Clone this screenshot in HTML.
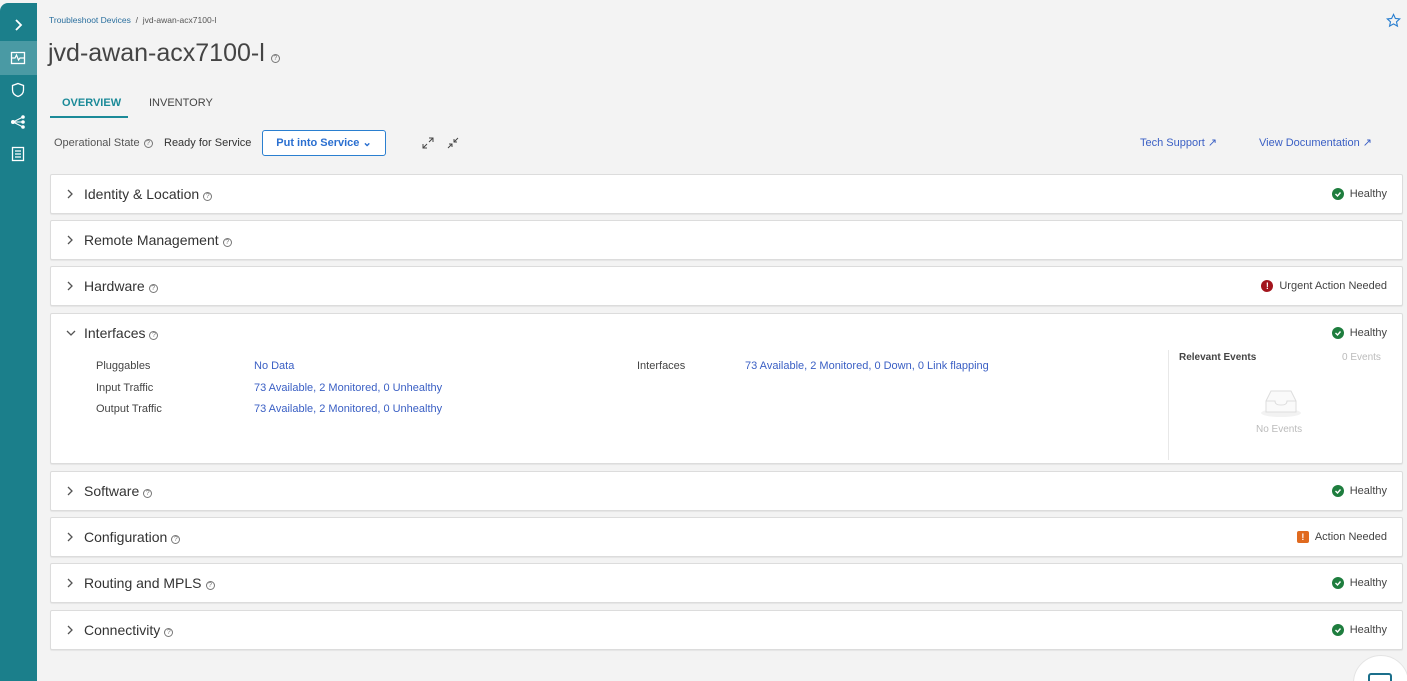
<!DOCTYPE html>
<html style="width:1407px;height:681px;overflow:hidden"><head><meta charset="utf-8"><style>
*{box-sizing:border-box;margin:0;padding:0}
body{width:1407px;height:681px;overflow:hidden;background:#f3f3f3;font-family:"Liberation Sans",sans-serif;color:#333;position:relative}
.sb{position:absolute;left:0;top:3px;width:37px;height:678px;background:#1b7f8b;border-radius:8px 0 0 0}
.sb .act{position:absolute;top:38px;left:0;width:37px;height:34px;background:#4a9aa4}
.sb svg{position:absolute;left:10px}
.a{position:absolute;white-space:nowrap}
.card{position:absolute;left:50px;width:1353px;background:#fff;border:1px solid #dcdcdc;border-radius:2px;box-shadow:0 1px 1px rgba(0,0,0,.06)}
.card .t{position:absolute;left:33px;top:11px;font-size:14px;color:#333}
.card .chev{position:absolute;left:14px;top:13px}
.q{display:inline-block;width:9px;height:9px;border:1px solid #777;border-radius:50%;font-size:7px;line-height:8px;text-align:center;color:#777;vertical-align:1px;margin-left:4px}
.st{position:absolute;right:15px;top:13px;font-size:11px;color:#444;display:flex;align-items:center;gap:6px}
.g{width:12px;height:12px;border-radius:50%;background:#1e7d3e;display:inline-flex;align-items:center;justify-content:center}
.lab{font-size:11px;color:#444}
.lnk{color:#3a5fc4}
</style></head><body>
<div class="sb">
<div class="act"></div>
<svg style="top:14px" width="16" height="16" viewBox="0 0 16 16"><path d="M6 3l5 5-5 5" stroke="#fff" stroke-width="1.8" fill="none"/></svg>
<svg style="top:47px" width="16" height="16" viewBox="0 0 16 16"><rect x="1.5" y="2.5" width="13" height="11" stroke="#fff" stroke-width="1.3" fill="none"/><path d="M2 8h3l1.5-3 2 5 1.5-2h4" stroke="#fff" stroke-width="1.2" fill="none"/></svg>
<svg style="top:79px" width="16" height="16" viewBox="0 0 16 16"><path d="M8 1.5l5.5 2v4.5c0 3.5-2.5 5.5-5.5 6.5-3-1-5.5-3-5.5-6.5V3.5z" stroke="#fff" stroke-width="1.3" fill="none"/></svg>
<svg style="top:111px" width="16" height="16" viewBox="0 0 16 16"><circle cx="3" cy="8" r="2" fill="#fff"/><circle cx="13" cy="3" r="1.8" fill="#fff"/><circle cx="13" cy="8" r="1.8" fill="#fff"/><circle cx="13" cy="13" r="1.8" fill="#fff"/><path d="M3 8L13 3M3 8h10M3 8l10 5" stroke="#fff" stroke-width="1"/></svg>
<svg style="top:143px" width="16" height="16" viewBox="0 0 16 16"><rect x="2.5" y="1.5" width="11" height="13" stroke="#fff" stroke-width="1.3" fill="none"/><path d="M5 5h6M5 8h6M5 11h6" stroke="#fff" stroke-width="1.2"/></svg>
</div>

<div class="a" style="left:49px;top:15px;font-size:8.5px;color:#555"><span style="color:#2a6f9e">Troubleshoot Devices</span> &nbsp;/&nbsp; jvd-awan-acx7100-l</div>
<svg class="a" style="left:1386px;top:13px" width="15" height="15" viewBox="0 0 16 16"><path d="M8 1.5l2 4.3 4.6.5-3.4 3.1 1 4.6L8 11.6 3.8 14l1-4.6L1.4 6.3l4.6-.5z" stroke="#2a7fd0" stroke-width="1.2" fill="none"/></svg>
<div class="a" style="left:48px;top:39px;font-size:25px;color:#444">jvd-awan-acx7100-l<span class="q" style="margin-left:6px">?</span></div>

<div class="a" style="left:62px;top:97px;font-size:11px;font-weight:bold;color:#1b8a98">OVERVIEW</div>
<div class="a" style="left:50px;top:116px;width:78px;height:2px;background:#1b8a98"></div>
<div class="a" style="left:149px;top:97px;font-size:11px;color:#444">INVENTORY</div>

<div class="a" style="left:54px;top:137px;font-size:11px;color:#555">Operational State<span class="q">?</span></div>
<div class="a" style="left:164px;top:137px;font-size:11px;color:#333">Ready for Service</div>
<div class="a" style="left:262px;top:130px;width:124px;height:26px;border:1px solid #2a7fd0;border-radius:3px;background:#fff;font-size:11px;font-weight:bold;color:#2a6fd0;text-align:center;line-height:24px">Put into Service &#8964;</div>
<svg class="a" style="left:422px;top:137px" width="12" height="12" viewBox="0 0 12 12"><path d="M1 11l4-4M7 5l4-4M1 7v4h4M7 1h4v4" stroke="#444" stroke-width="1" fill="none"/></svg>
<svg class="a" style="left:447px;top:137px" width="12" height="12" viewBox="0 0 12 12"><path d="M1 11l4-4M7 5l4-4M2 7h3v3M7 2v3h3" stroke="#444" stroke-width="1" fill="none"/></svg>
<div class="a lnk" style="left:1140px;top:136px;font-size:11px">Tech Support <span style="font-size:11px">&#8599;</span></div>
<div class="a lnk" style="left:1259px;top:136px;font-size:11px">View Documentation <span>&#8599;</span></div>

<div class="card" style="top:174px;height:40px"><svg class="chev" width="10" height="12"><path d="M3 2l4 4-4 4" stroke="#555" stroke-width="1.3" fill="none"/></svg><div class="t">Identity &amp; Location<span class="q">?</span></div><div class="st"><span class="g"><svg width="8" height="8"><path d="M1.5 4l2 2 3-3.5" stroke="#fff" stroke-width="1.4" fill="none"/></svg></span>Healthy</div></div>
<div class="card" style="top:220px;height:40px"><svg class="chev" width="10" height="12"><path d="M3 2l4 4-4 4" stroke="#555" stroke-width="1.3" fill="none"/></svg><div class="t">Remote Management<span class="q">?</span></div></div>
<div class="card" style="top:266px;height:40px"><svg class="chev" width="10" height="12"><path d="M3 2l4 4-4 4" stroke="#555" stroke-width="1.3" fill="none"/></svg><div class="t">Hardware<span class="q">?</span></div><div class="st"><span class="g" style="background:#a3151d;color:#fff;font-size:9px;font-weight:bold">!</span>Urgent Action Needed</div></div>
<div class="card" style="top:313px;height:151px"><svg class="chev" width="12" height="12"><path d="M2 4l4 4 4-4" stroke="#555" stroke-width="1.3" fill="none"/></svg><div class="t">Interfaces<span class="q">?</span></div><div class="st"><span class="g"><svg width="8" height="8"><path d="M1.5 4l2 2 3-3.5" stroke="#fff" stroke-width="1.4" fill="none"/></svg></span>Healthy</div>
<div class="a lab" style="left:45px;top:46px">Pluggables</div><div class="a lab lnk" style="left:203px;top:46px">No Data</div>
<div class="a lab" style="left:45px;top:68px">Input Traffic</div><div class="a lab lnk" style="left:203px;top:68px">73 Available, 2 Monitored, 0 Unhealthy</div>
<div class="a lab" style="left:45px;top:89px">Output Traffic</div><div class="a lab lnk" style="left:203px;top:89px">73 Available, 2 Monitored, 0 Unhealthy</div>
<div class="a lab" style="left:586px;top:46px">Interfaces</div><div class="a lab lnk" style="left:694px;top:46px">73 Available, 2 Monitored, 0 Down, 0 Link flapping</div>
<div class="a" style="left:1117px;top:36px;width:1px;height:110px;background:#e8e8e8"></div>
<div class="a" style="left:1128px;top:38px;font-size:10px;font-weight:bold;color:#444">Relevant Events</div>
<div class="a" style="left:1291px;top:38px;font-size:10px;color:#bbb">0 Events</div>
<svg class="a" style="left:1207px;top:73px" width="46" height="32" viewBox="0 0 46 32"><ellipse cx="23" cy="26" rx="20" ry="4" fill="#f2f2f2"/><path d="M8 14l5-10h20l5 10v11H8z" fill="#fafafa" stroke="#ddd"/><path d="M8 14h9c0 3 2 4 6 4s6-1 6-4h9" stroke="#ddd" fill="none"/></svg>
<div class="a" style="left:1205px;top:110px;font-size:10px;color:#bbb">No Events</div>
</div>
<div class="card" style="top:471px;height:40px"><svg class="chev" width="10" height="12"><path d="M3 2l4 4-4 4" stroke="#555" stroke-width="1.3" fill="none"/></svg><div class="t">Software<span class="q">?</span></div><div class="st"><span class="g"><svg width="8" height="8"><path d="M1.5 4l2 2 3-3.5" stroke="#fff" stroke-width="1.4" fill="none"/></svg></span>Healthy</div></div>
<div class="card" style="top:517px;height:40px"><svg class="chev" width="10" height="12"><path d="M3 2l4 4-4 4" stroke="#555" stroke-width="1.3" fill="none"/></svg><div class="t">Configuration<span class="q">?</span></div><div class="st"><span class="g" style="border-radius:2px;background:#e06a1f;color:#fff;font-size:9px;font-weight:bold">!</span>Action Needed</div></div>
<div class="card" style="top:563px;height:40px"><svg class="chev" width="10" height="12"><path d="M3 2l4 4-4 4" stroke="#555" stroke-width="1.3" fill="none"/></svg><div class="t">Routing and MPLS<span class="q">?</span></div><div class="st"><span class="g"><svg width="8" height="8"><path d="M1.5 4l2 2 3-3.5" stroke="#fff" stroke-width="1.4" fill="none"/></svg></span>Healthy</div></div>
<div class="card" style="top:610px;height:40px"><svg class="chev" width="10" height="12"><path d="M3 2l4 4-4 4" stroke="#555" stroke-width="1.3" fill="none"/></svg><div class="t">Connectivity<span class="q">?</span></div><div class="st"><span class="g"><svg width="8" height="8"><path d="M1.5 4l2 2 3-3.5" stroke="#fff" stroke-width="1.4" fill="none"/></svg></span>Healthy</div></div>

<div class="a" style="left:1353px;top:655px;width:56px;height:56px;border-radius:50%;background:#fff;border:1px solid #e4e4e4"></div>
<div class="a" style="left:1368px;top:673px;width:24px;height:14px;border:2px solid #1b6f8b;border-radius:3px"></div>
</body></html>
